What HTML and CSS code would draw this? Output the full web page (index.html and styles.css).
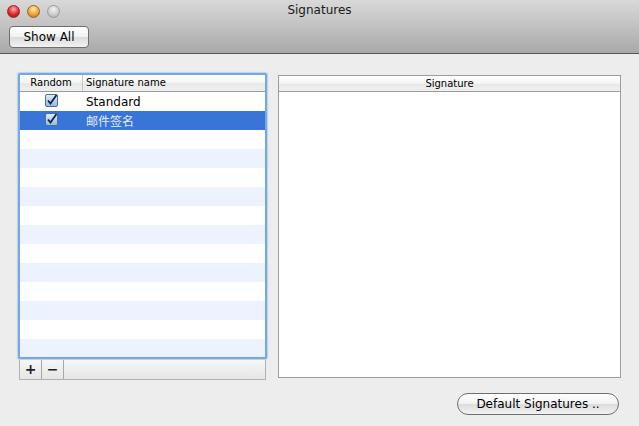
FILE: index.html
```html
<!DOCTYPE html>
<html lang="zh">
<head>
    <meta charset="UTF-8">
    <title>Signatures</title>
    <link rel="stylesheet" href="styles.css">
</head>
<body>
    <div class="window">
        <div class="titlebar">
            <div class="titlerow">
                <div class="lights">
                    <span class="light red"></span>
                    <span class="light orange"></span>
                    <span class="light grey"></span>
                </div>
                <div class="title">Signatures</div>
            </div>
            <div class="toolbar">
                <button class="btn show-all">Show All</button>
            </div>
        </div>

        <div class="content">
            <div class="left">
                <div class="list">
                    <div class="list-head">
                        <div class="col-random">Random</div>
                        <div class="col-name">Signature name</div>
                    </div>
                    <div class="rows">
                        <div class="row">
                            <div class="col-random"><svg class="check" width="13" height="13" viewBox="0 0 13 13"><defs><linearGradient id="cb" x1="0" y1="0" x2="0" y2="1"><stop offset="0" stop-color="#dfeefc"/><stop offset="1" stop-color="#8fb8e4"/></linearGradient></defs><rect x="0.5" y="0.5" width="12" height="12" rx="1.5" fill="url(#cb)" stroke="#4f6f98"/><path d="M3 6.5 L5.5 9.5 L11.5 1" fill="none" stroke="#15233d" stroke-width="1.8"/></svg></div>
                            <div class="col-name">Standard</div>
                        </div>
                        <div class="row selected">
                            <div class="col-random"><svg class="check" width="13" height="13" viewBox="0 0 13 13"><rect x="0.5" y="0.5" width="12" height="12" rx="1.5" fill="url(#cb)" stroke="#4f6f98"/><path d="M3 6.5 L5.5 9.5 L11.5 1" fill="none" stroke="#15233d" stroke-width="1.8"/></svg></div>
                            <div class="col-name">邮件签名</div>
                        </div>
                        <div class="row"></div>
                        <div class="row"></div>
                        <div class="row"></div>
                        <div class="row"></div>
                        <div class="row"></div>
                        <div class="row"></div>
                        <div class="row"></div>
                        <div class="row"></div>
                        <div class="row"></div>
                        <div class="row"></div>
                        <div class="row"></div>
                        <div class="row"></div>
                    </div>
                </div>
                <div class="list-buttons">
                    <button class="small-btn">+</button>
                    <button class="small-btn">&minus;</button>
                </div>
            </div>

            <div class="right">
                <div class="sig-head">Signature</div>
                <div class="sig-body"></div>
            </div>
        </div>

        <div class="footer">
            <button class="btn pill">Default Signatures ..</button>
        </div>
    </div>
</body>
</html>
```

FILE: styles.css
```css
body, html {
    margin: 0;
    padding: 0;
    overflow: hidden;
    font-family: "DejaVu Sans", "Noto Sans CJK SC", sans-serif;
    color: #000;
}

.window {
    width: 639px;
    height: 426px;
    background: #ededed;
}

.titlebar {
    height: 53px;
    background: linear-gradient(#d9d9d9, #a9a9a9);
    border-bottom: 1px solid #555;
}

.titlerow {
    height: 22px;
    position: relative;
    display: flex;
    align-items: center;
}

.lights {
    display: flex;
    gap: 7px;
    padding-left: 7px;
}

.light {
    width: 13px;
    height: 13px;
    border-radius: 50%;
    box-sizing: border-box;
}

.light.red {
    background: radial-gradient(circle at 50% 30%, #ffb3b3 0, #e5232a 55%, #a00d12 100%);
    border: 1px solid #8f2a2a;
}

.light.orange {
    background: radial-gradient(circle at 50% 30%, #fff0b0 0, #f1a234 55%, #b56a10 100%);
    border: 1px solid #96652a;
}

.light.grey {
    background: radial-gradient(circle at 50% 30%, #f2f2f2 0, #cdcdcd 55%, #a9a9a9 100%);
    border: 1px solid #9a9a9a;
}

.title {
    position: absolute;
    left: 0;
    right: 0;
    top: 3px;
    text-align: center;
    font-size: 12px;
    color: #1a1a1a;
}

.toolbar {
    padding: 4px 0 0 9px;
}

.btn {
    font-family: "DejaVu Sans", sans-serif;
    font-size: 12px;
    color: #000;
    background: linear-gradient(#ffffff, #f1f1f1 50%, #dcdcdc 51%, #f2f2f2);
    border: 1px solid #6f6f6f;
    padding: 0;
    cursor: pointer;
}

.show-all {
    width: 80px;
    height: 22px;
    border-radius: 4px;
}

.content {
    display: flex;
    padding: 19px 0 0 18px;
}

.left {
    width: 249px;
}

.list {
    height: 282px;
    border: 2px solid #78a8e0;
    box-shadow: 0 0 1px 1px #b7d0ef;
    border-radius: 2px;
    background: #fff;
    overflow: hidden;
}

.list-head {
    display: flex;
    height: 16px;
    background: linear-gradient(#ffffff, #f4f4f4 50%, #e8e8e8 51%, #efefef);
    border-bottom: 1px solid #9c9c9c;
    font-size: 10px;
    line-height: 16px;
}

.list-head .col-random {
    width: 62px;
    text-align: center;
    border-right: 1px solid #c2c2c2;
}

.list-head .col-name {
    padding-left: 3px;
}

.row {
    display: flex;
    height: 19px;
    align-items: center;
    font-size: 12px;
}

.row:nth-child(even) {
    background: #edf3fe;
}

.row.selected {
    background: #3875d7;
    color: #e6ecfa;
}

.row .col-random {
    width: 63px;
    display: flex;
    justify-content: center;
}

.check {
    display: block;
    margin-top: -3px;
}

.row .col-name {
    padding-left: 3px;
}

.row.selected .col-name {
    font-family: "Noto Sans CJK SC", sans-serif;
}

.list-buttons {
    display: flex;
    height: 19px;
    margin: 1px 1px 0 1px;
    background: linear-gradient(#f6f6f6, #e6e6e6);
    border: 1px solid #b2b2b2;
    border-top: none;
}

.small-btn {
    width: 22px;
    height: 19px;
    padding: 0;
    border: none;
    border-right: 1px solid #a8a8a8;
    background: transparent;
    font-family: "DejaVu Sans", sans-serif;
    font-size: 14px;
    font-weight: bold;
    line-height: 19px;
    color: #222;
}

.right {
    width: 341px;
    height: 301px;
    margin: 2px 0 0 11px;
    border: 1px solid #9d9d9d;
    background: #fff;
    display: flex;
    flex-direction: column;
}

.sig-head {
    height: 15px;
    line-height: 15px;
    text-align: center;
    font-size: 10px;
    background: linear-gradient(#ffffff, #f4f4f4 50%, #e8e8e8 51%, #efefef);
    border-bottom: 1px solid #9c9c9c;
}

.sig-body {
    flex: 1;
}

.footer {
    display: flex;
    justify-content: flex-end;
    padding: 13px 20px 0 0;
}

.pill {
    width: 162px;
    height: 22px;
    border-radius: 11px;
}
```
